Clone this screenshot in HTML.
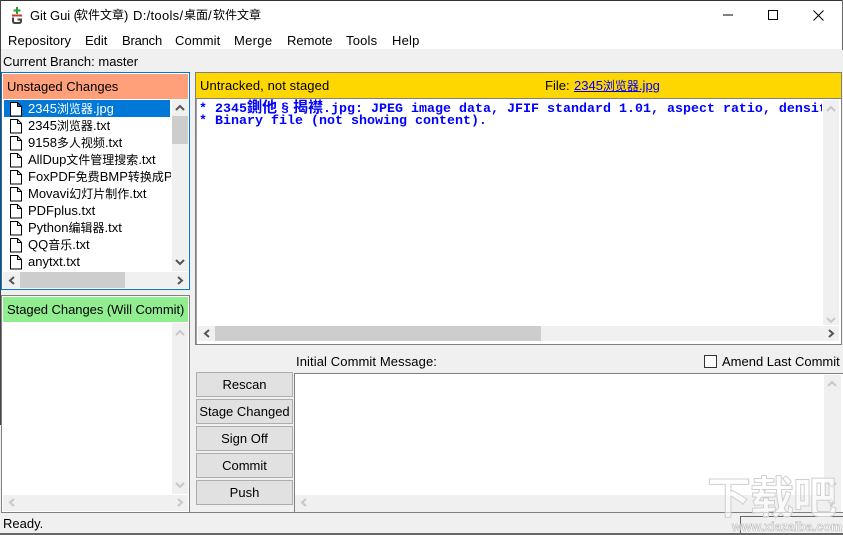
<!DOCTYPE html>
<html><head><meta charset="utf-8">
<style>
html,body{margin:0;padding:0}
body{width:843px;height:535px;overflow:hidden;position:relative;background:#f0f0f0;font-family:"Liberation Sans","Noto Sans CJK SC",sans-serif;font-size:13px;color:#000}
.a{position:absolute;box-sizing:border-box}
.t{position:absolute;white-space:nowrap;line-height:17px;height:17px}
.c{font-size:12px}
.row{position:absolute;left:28px;white-space:nowrap;line-height:17px;height:17px;width:143px;overflow:hidden}
.btn{position:absolute;left:196px;width:97px;height:25px;background:#e1e1e1;border:1px solid #adadad;box-sizing:border-box;text-align:center;line-height:23px}
.mono{position:absolute;left:199px;font:bold 13.33px/13px "Liberation Mono","Noto Sans CJK SC",monospace;color:#0000ff;white-space:pre}
.mono b{font-size:15px;font-weight:bold;line-height:13px}
svg{position:absolute;overflow:visible}
</style></head><body>

<div class="a" style="left:0;top:0;width:843px;height:49px;background:#fff"></div>
<div class="a" style="left:0;top:0;width:843px;height:1px;background:#333"></div>
<div class="a" style="left:0;top:0;width:1px;height:425px;background:#444"></div>
<div class="a" style="left:842px;top:0;width:1px;height:50px;background:#666"></div>
<svg style="left:0;top:0" width="30" height="26">
<path d="M17 7v7M13.500 10.500h7" stroke="#2a9d3a" stroke-width="2" fill="none"/>
<rect x="12" y="14.500" width="10" height="2" fill="#d6332a"/>
<path d="M13 17.500v3.500q0 2 2 2h4q2 0 2-2v-1.500h-3.500" stroke="#444" stroke-width="2" fill="none"/>
</svg>
<div class="t" style="left:30px;top:7px;letter-spacing:-.05px">Git Gui (</div>
<div class="t c" style="left:76px;top:7px">软件文章</div>
<div class="t" style="left:124px;top:7px">)</div>
<div class="t" style="left:133px;top:7px;letter-spacing:.3px">D:/tools/</div>
<div class="t c" style="left:184px;top:7px">桌面</div>
<div class="t" style="left:208px;top:7px">/</div>
<div class="t c" style="left:213px;top:7px">软件文章</div>
<svg style="left:723px;top:9px" width="110" height="14">
<path d="M0 6h10" stroke="#000" fill="none"/>
<rect x="45.500" y="1.500" width="9" height="9" stroke="#000" fill="none"/>
<path d="M90.500 1.500l10 10M100.500 1.500l-10 10" stroke="#000" fill="none"/>
</svg>
<div class="t" style="left:8px;top:32px;letter-spacing:.1px">Repository</div>
<div class="t" style="left:85px;top:32px">Edit</div>
<div class="t" style="left:122px;top:32px;letter-spacing:-.2px">Branch</div>
<div class="t" style="left:175px;top:32px;letter-spacing:.1px">Commit</div>
<div class="t" style="left:234px;top:32px;letter-spacing:.3px">Merge</div>
<div class="t" style="left:287px;top:32px">Remote</div>
<div class="t" style="left:346px;top:32px;letter-spacing:.2px">Tools</div>
<div class="t" style="left:392px;top:32px;letter-spacing:.2px">Help</div>

<div class="t" style="left:3px;top:53px">Current Branch: master</div>

<!-- Unstaged -->
<div class="a" style="left:1px;top:72px;width:189px;height:218px;border:1px solid #0078d7;background:#fff"></div>
<div class="a" style="left:3px;top:74px;width:185px;height:25px;background:#ffa07a"></div>
<div class="t" style="left:7px;top:78px">Unstaged Changes</div>
<div class="a" style="left:4px;top:100px;width:166px;height:17px;background:#0078d7"></div>
<div class="a" style="left:172px;top:100px;width:16px;height:171px;background:#f0f0f0"></div>
<div class="a" style="left:172px;top:116px;width:16px;height:28px;background:#cdcdcd"></div>
<div class="a" style="left:3px;top:272px;width:185px;height:16px;background:#f0f0f0"></div>
<div class="a" style="left:20px;top:272px;width:105px;height:16px;background:#cdcdcd"></div>
<svg style="left:0;top:0" width="190" height="290">
<g fill="none" stroke="#555" stroke-width="2">
<path d="M176 110l4-4 4 4M176 260l4 4 4-4M14 277l-4 3.500 4 3.500M178 277l4 3.500-4 3.500"/>
</g>
<g stroke="#000" stroke-width="1">
<path d="M10.500 102.500h7l4 4v9.500h-11zM17.500 102.500v4h4" fill="#fff"/>
<path d="M10.500 119.500h7l4 4v9.500h-11zM17.500 119.500v4h4" fill="#fff"/>
<path d="M10.500 136.500h7l4 4v9.500h-11zM17.500 136.500v4h4" fill="#fff"/>
<path d="M10.500 153.500h7l4 4v9.500h-11zM17.500 153.500v4h4" fill="#fff"/>
<path d="M10.500 170.500h7l4 4v9.500h-11zM17.500 170.500v4h4" fill="#fff"/>
<path d="M10.500 187.500h7l4 4v9.500h-11zM17.500 187.500v4h4" fill="#fff"/>
<path d="M10.500 204.500h7l4 4v9.500h-11zM17.500 204.500v4h4" fill="#fff"/>
<path d="M10.500 221.500h7l4 4v9.500h-11zM17.500 221.500v4h4" fill="#fff"/>
<path d="M10.500 238.500h7l4 4v9.500h-11zM17.500 238.500v4h4" fill="#fff"/>
<path d="M10.500 255.500h7l4 4v9.500h-11zM17.500 255.500v4h4" fill="#fff"/>
</g>
</svg>
<div class="row" style="top:100px;color:#fff">2345<span class="c">浏览器</span>.jpg</div>
<div class="row" style="top:117px">2345<span class="c">浏览器</span>.txt</div>
<div class="row" style="top:134px">9158<span class="c">多人视频</span>.txt</div>
<div class="row" style="top:151px">AllDup<span class="c">文件管理搜索</span>.txt</div>
<div class="row" style="top:168px">FoxPDF<span class="c">免费</span>BMP<span class="c">转换成</span>PDF<span class="c">转换器</span>.txt</div>
<div class="row" style="top:185px">Movavi<span class="c">幻灯片制作</span>.txt</div>
<div class="row" style="top:202px">PDFplus.txt</div>
<div class="row" style="top:219px">Python<span class="c">编辑器</span>.txt</div>
<div class="row" style="top:236px">QQ<span class="c">音乐</span>.txt</div>
<div class="row" style="top:253px">anytxt.txt</div>

<!-- Staged -->
<div class="a" style="left:1px;top:295px;width:189px;height:218px;border:1px solid #808080;background:#fff"></div>
<div class="a" style="left:3px;top:297px;width:185px;height:25px;background:#90ee90"></div>
<div class="t" style="left:7px;top:301px;letter-spacing:-.04px">Staged Changes (Will Commit)</div>
<div class="a" style="left:172px;top:323px;width:16px;height:171px;background:#f0f0f0"></div>
<div class="a" style="left:3px;top:495px;width:185px;height:16px;background:#f0f0f0"></div>
<svg style="left:0;top:0" width="190" height="513">
<g fill="none" stroke="#c8c8c8" stroke-width="2">
<path d="M176 335l4-4 4 4M176 483l4 4 4-4M14 499l-4 3.500 4 3.500M178 499l4 3.500-4 3.500"/>
</g>
</svg>

<!-- Diff -->
<div class="a" style="left:195px;top:72px;width:647px;height:273px;border:1px solid #808080;background:#fff"></div>
<div class="a" style="left:196px;top:99px;width:1px;height:245px;background:#a0a0a0"></div>
<div class="a" style="left:196px;top:73px;width:645px;height:25px;background:#ffd700"></div>
<div class="a" style="left:196px;top:98px;width:645px;height:1px;background:#808080"></div>
<div class="t" style="left:200px;top:77px;letter-spacing:.1px">Untracked, not staged</div>
<div class="t" style="left:545px;top:77px">File:</div>
<div class="t" style="left:574px;top:77px;color:#0000ff;text-decoration:underline">2345<span class="c">浏览器</span>.jpg</div>
<div class="a" style="left:197px;top:99px;width:625px;height:226px;overflow:hidden">
<div class="mono" style="left:2px;top:3px">* 2345<b>鍘他</b><span style="padding:0 4px">§</span><b>揭襟</b>.jpg: JPEG image data, JFIF standard 1.01, aspect ratio, density 1x1, segment length 16</div>
<div class="mono" style="left:2px;top:16px">* Binary file (not showing content).</div>
</div>
<div class="a" style="left:823px;top:100px;width:16px;height:225px;background:#f0f0f0"></div>
<div class="a" style="left:198px;top:326px;width:641px;height:15px;background:#f0f0f0"></div>
<div class="a" style="left:215px;top:326px;width:326px;height:15px;background:#cdcdcd"></div>
<svg style="left:0;top:0" width="843" height="345">
<g fill="none" stroke="#555" stroke-width="2">
<path d="M209 330l-4 3.500 4 3.500M829 330l4 3.500-4 3.500"/>
</g>
<g fill="none" stroke="#c8c8c8" stroke-width="2">
<path d="M827 111l4-4 4 4M827 318l4 4 4-4"/>
</g>
</svg>

<!-- Commit area -->
<div class="t" style="left:296px;top:353px;letter-spacing:.1px">Initial Commit Message:</div>
<div class="a" style="left:704px;top:355px;width:13px;height:13px;background:#fff;border:1px solid #333"></div>
<div class="t" style="left:722px;top:353px">Amend Last Commit</div>
<div class="btn" style="top:372px">Rescan</div>
<div class="btn" style="top:399px">Stage Changed</div>
<div class="btn" style="top:426px">Sign Off</div>
<div class="btn" style="top:453px">Commit</div>
<div class="btn" style="top:480px">Push</div>
<div class="a" style="left:294px;top:373px;width:549px;height:140px;border:1px solid #808080;border-right:none;background:#fff"></div>
<div class="a" style="left:824px;top:375px;width:17px;height:120px;background:#f0f0f0"></div>
<div class="a" style="left:295px;top:495px;width:546px;height:17px;background:#f0f0f0"></div>
<svg style="left:0;top:0" width="843" height="513">
<g fill="none" stroke="#c8c8c8" stroke-width="2">
<path d="M828 386l4-4 4 4M828 483l4 4 4-4M306 499l-4 3.500 4 3.500M830 499l4 3.500-4 3.500"/>
</g>
</svg>

<!-- Status -->
<div class="a" style="left:1px;top:512px;width:842px;height:1px;background:#808080"></div>
<div class="t" style="left:3px;top:515px">Ready.</div>
<div class="a" style="left:0;top:533px;width:843px;height:2px;background:#666"></div>
<div class="a" style="left:740px;top:516px;width:103px;height:1px;background:#666"></div>
<div class="a" style="left:740px;top:516px;width:1px;height:17px;background:#666"></div>

<!-- Watermark -->
<div class="t" style="left:707px;top:477px;height:44px;line-height:44px;font-size:44px;font-weight:bold;color:rgba(255,255,255,.6);-webkit-text-stroke:1px #cfcfcf;letter-spacing:-1px">下载吧</div>
<div class="t" style="left:732px;top:520px;height:14px;line-height:14px;font-size:12.500px;font-weight:bold;color:rgba(255,255,255,.6);-webkit-text-stroke:.6px #bcbcbc">www.xiazaiba.com</div>
</body></html>
